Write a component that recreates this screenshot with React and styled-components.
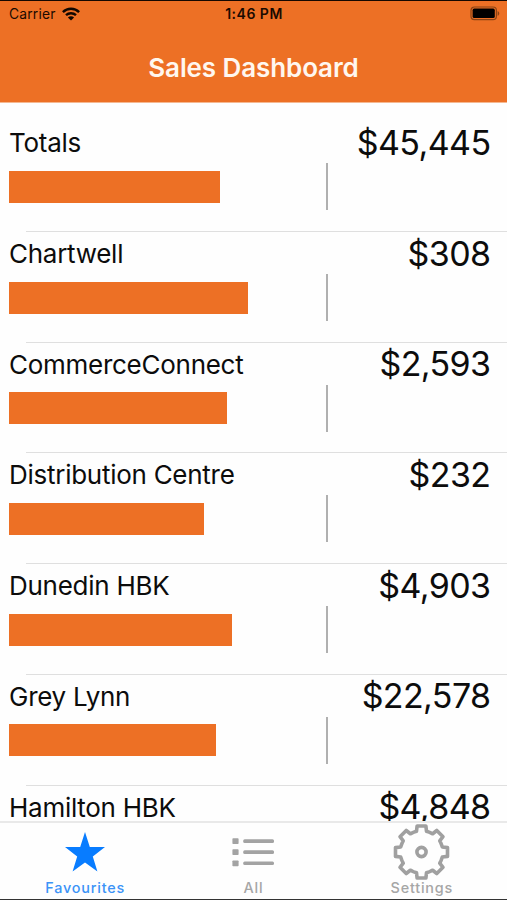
import styled, { createGlobalStyle } from "styled-components";

const rows = [
  { name: "Totals", amount: "$45,445", width: 210.5 },
  { name: "Chartwell", amount: "$308", width: 238.5 },
  { name: "CommerceConnect", amount: "$2,593", width: 218 },
  { name: "Distribution Centre", amount: "$232", width: 194.5 },
  { name: "Dunedin HBK", amount: "$4,903", width: 223 },
  { name: "Grey Lynn", amount: "$22,578", width: 207 },
  { name: "Hamilton HBK", amount: "$4,848", width: 215 },
];

// outline of the cog, eight teeth around the centre
const cogPath = () => {
  const points = [];
  for (let i = 0; i < 8; i++) {
    const a = (i * Math.PI) / 4;
    [[-7.6, -19.9], [-5, -20.8], [-4.4, -26], [4.4, -26], [5, -20.8], [7.6, -19.9]].forEach(([x, y]) => {
      const px = x * Math.cos(a) - y * Math.sin(a);
      const py = x * Math.sin(a) + y * Math.cos(a);
      points.push(`${px.toFixed(2)} ${py.toFixed(2)}`);
    });
  }
  return `M${points.join("L")}Z`;
};

function App() {
  return (
    <>
      <GlobalStyle />
      <Screen>
        <Header>
          <StatusBar>
            <Carrier>
              <span>Carrier</span>
              <WifiIcon />
            </Carrier>
            <Clock>1:46 PM</Clock>
            <BatteryIcon />
          </StatusBar>
          <Title>Sales Dashboard</Title>
        </Header>
        <List>
          {rows.map((row) => (
            <Row key={row.name}>
              <RowTop>
                <Name>{row.name}</Name>
                <Amount>{row.amount}</Amount>
              </RowTop>
              <Chart>
                <Bar style={{ width: row.width }} />
                <Target />
              </Chart>
              <Separator />
            </Row>
          ))}
        </List>
        <TabBar>
          <Tab $active>
            <TabIcon><StarIcon /></TabIcon>
            <TabLabel>Favourites</TabLabel>
          </Tab>
          <Tab>
            <TabIcon><ListIcon /></TabIcon>
            <TabLabel>All</TabLabel>
          </Tab>
          <Tab>
            <TabIcon><CogIcon /></TabIcon>
            <TabLabel>Settings</TabLabel>
          </Tab>
        </TabBar>
      </Screen>
    </>
  );
}

export default App;

const WifiIcon = () => (
  <svg width="18" height="14" viewBox="0 0 18 14" fill="none" stroke="#120700" strokeWidth="2.4">
    <path d="M.9 5.1C5.4.6 12.6.6 17.1 5.1" />
    <path d="M4 8.2C6.8 5.5 11.2 5.5 14 8.2" />
    <path d="M9 13.6L5.9 10.5C7.6 8.9 10.4 8.9 12.1 10.5Z" fill="#120700" stroke="none" />
  </svg>
);

const BatteryIcon = () => (
  <svg width="31" height="15" viewBox="0 0 31 15">
    <rect x="1" y="1" width="25.4" height="12.6" rx="3.4" fill="none" stroke="#8a4315" strokeWidth="1.2" />
    <rect x="2.6" y="2.6" width="22.2" height="9.4" rx="1.6" fill="#000" />
    <path d="M27.6 5V9.8C29.8 9 29.8 5.8 27.6 5Z" fill="#8a4315" />
  </svg>
);

const StarIcon = () => (
  <svg width="40" height="40" viewBox="0 0 40 40" fill="#087cff">
    <path d="M20 0L24.8 14.9H40L27.8 24.5L32.4 39.6L20 30.4L7.6 39.6L12.2 24.5L0 14.9H15.2Z" />
  </svg>
);

const ListIcon = () => (
  <svg width="42" height="29" viewBox="0 0 42 29" fill="#a3a3a3">
    {[0, 11, 22.2].map((y) => (
      <g key={y}>
        <rect x="0.4" y={y + 0.2} width="6.2" height="5.8" rx="0.8" />
        <rect x="11.2" y={y + 1.3} width="30.8" height="3.6" rx="1.5" />
      </g>
    ))}
  </svg>
);

const CogIcon = () => (
  <svg width="58" height="58" viewBox="-28.5 -29 58 58" fill="none" stroke="#a0a0a0" strokeWidth="3.6" strokeLinejoin="round">
    <path d={cogPath()} />
    <circle r="4.6" />
  </svg>
);

const GlobalStyle = createGlobalStyle`
  body {
    margin: 0;
    background: #fff;
  }
  * {
    box-sizing: border-box;
  }
`;

const Screen = styled.div`
  display: flex;
  flex-direction: column;
  width: 507px;
  height: 900px;
  overflow: hidden;
  border-top: 1px solid #150700;
  border-bottom: 1px solid #333;
  background: #fefefe;
  color: #0c0c0c;
  font-family: Inter, "Liberation Sans", sans-serif;
`;

const Header = styled.header`
  flex: none;
  height: 102px;
  background: #ed7025;
  border-bottom: 1px solid #f5b891;
`;

const StatusBar = styled.div`
  display: grid;
  grid-template-columns: 1fr auto 1fr;
  align-items: center;
  height: 25px;
  padding: 0 6px 0 9px;
  color: #1a0a00;
  font-size: 13.8px;

  > svg {
    justify-self: end;
  }
`;

const Carrier = styled.div`
  display: flex;
  align-items: center;
  gap: 6px;
  letter-spacing: 0.2px;
`;

const Clock = styled.div`
  margin-right: 2px;
  font-size: 14px;
  font-weight: 600;
  letter-spacing: 0.5px;
`;

const Title = styled.h1`
  margin: 0;
  padding-top: 25px;
  color: #fff7ef;
  font-size: 26px;
  font-weight: 600;
  line-height: 34px;
  letter-spacing: -0.1px;
  text-align: center;
`;

const List = styled.main`
  flex: 1;
  min-height: 0;
  overflow: hidden;
  padding-top: 18.4px;
`;

const Row = styled.section`
  height: 110.7px;
  display: flex;
  flex-direction: column;
`;

const RowTop = styled.div`
  display: flex;
  justify-content: space-between;
  align-items: center;
  height: 42px;
  padding: 1px 16.5px 0 9px;
  white-space: nowrap;
`;

const Name = styled.span`
  font-size: 26px;
  letter-spacing: -0.27px;
`;

const Amount = styled.span`
  font-size: 34px;
  line-height: 34px;
  letter-spacing: -0.6px;
`;

const Chart = styled.div`
  display: grid;
  grid-template-columns: 317px 2px;
  align-items: center;
  height: 47px;
  padding-left: 9px;
`;

const Bar = styled.div`
  height: 32px;
  background: #ed7025;
`;

const Target = styled.div`
  height: 47px;
  background: #b0b0b0;
`;

const Separator = styled.div`
  height: 1px;
  margin: auto 0 0 26px;
  background: #dfdfdf;
`;

const TabBar = styled.nav`
  flex: none;
  display: grid;
  grid-template-columns: repeat(3, 1fr);
  height: 78px;
  padding: 0 1px;
  border-top: 2px solid #e9e9e9;
  background: #fefefe;
`;

const Tab = styled.div`
  display: flex;
  flex-direction: column;
  align-items: center;
  color: ${({ $active }) => ($active ? "#3b93f7" : "#a6a6a6")};
`;

const TabIcon = styled.div`
  display: flex;
  align-items: center;
  justify-content: center;
  height: 58px;
`;

const TabLabel = styled.span`
  font-size: 14.4px;
  font-weight: 500;
  line-height: 14px;
  letter-spacing: 0.8px;
`;
